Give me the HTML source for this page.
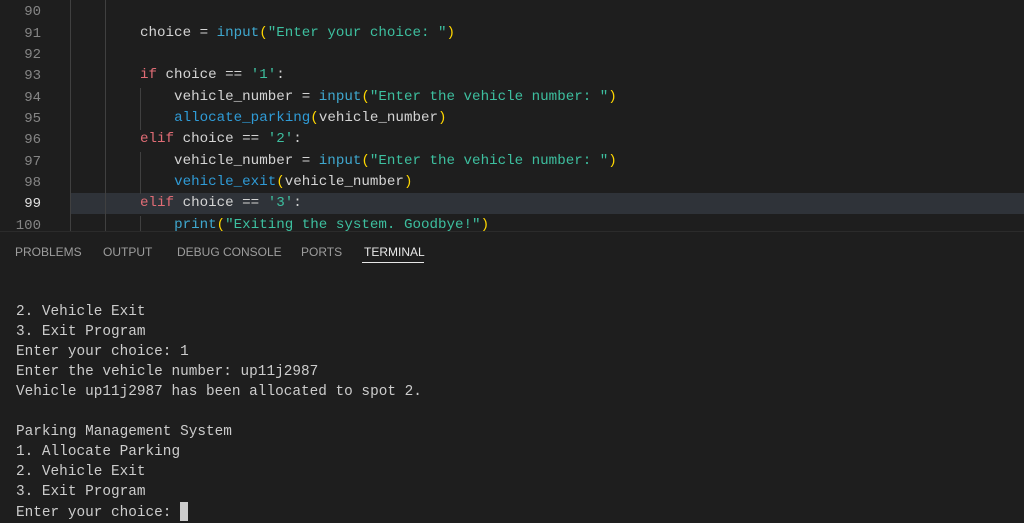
<!DOCTYPE html>
<html><head><style>
*{margin:0;padding:0;box-sizing:border-box}
body{width:1024px;height:521px;overflow:hidden;background:#1e1e1e;font-family:"Liberation Mono",monospace;position:relative}
#ed{position:absolute;left:0;top:0;width:1024px;height:231px;background:#1e1e1e;overflow:hidden}
.ln{position:absolute;left:0;width:41px;text-align:right;color:#858585;font-size:14px;margin-top:2px}
.cl{position:absolute;left:140px;font-size:14.2px;white-space:pre;color:#d4d4d4;margin-top:2px}
.g{position:absolute;width:1px;background:#404040}
#hl{position:absolute;left:70px;top:193px;width:954px;height:21px;background:#2f3339}
.k{color:#e06c75}.f{color:#3fa8cf}.s{color:#3dbf9f}.p{color:#ffd700}.w{color:#dcdcdc}.b{color:#4fc1ff}.fn{color:#2f9bd6}
#bd{position:absolute;left:0;top:231px;width:1024px;height:1px;background:#2b2b2b}
.tab{position:absolute;top:245px;font-family:"Liberation Sans",sans-serif;font-size:12px;color:#9d9d9d}
#term{position:absolute;left:16px;top:302px;font-size:14.4px;line-height:20px;color:#cccccc;white-space:pre}
</style></head><body>
<div id="ed">
<div id="hl"></div>
<div class="g" style="left:70px;top:0;height:231px"></div>
<div class="g" style="left:105px;top:0;height:231px"></div>
<div class="g" style="left:140px;top:88px;height:42px"></div>
<div class="g" style="left:140px;top:152px;height:42px"></div>
<div class="g" style="left:140px;top:216px;height:15px"></div>
<div class="ln" style="top:2px">90</div>
<div class="ln" style="top:24px">91</div>
<div class="ln" style="top:45px">92</div>
<div class="ln" style="top:66px">93</div>
<div class="ln" style="top:88px">94</div>
<div class="ln" style="top:109px">95</div>
<div class="ln" style="top:130px">96</div>
<div class="ln" style="top:152px">97</div>
<div class="ln" style="top:173px">98</div>
<div class="ln" style="top:194px;color:#e0e0e0">99</div>
<div class="ln" style="top:216px">100</div>
<div class="cl" style="top:23px">choice = <span class="f">input</span><span class="p">(</span><span class="s">"Enter your choice: "</span><span class="p">)</span></div>
<div class="cl" style="top:65px"><span class="k">if</span> choice == <span class="s">'1'</span>:</div>
<div class="cl" style="top:87px">    vehicle_number = <span class="f">input</span><span class="p">(</span><span class="s">"Enter the vehicle number: "</span><span class="p">)</span></div>
<div class="cl" style="top:108px">    <span class="fn">allocate_parking</span><span class="p">(</span>vehicle_number<span class="p">)</span></div>
<div class="cl" style="top:129px"><span class="k">elif</span> choice == <span class="s">'2'</span>:</div>
<div class="cl" style="top:151px">    vehicle_number = <span class="f">input</span><span class="p">(</span><span class="s">"Enter the vehicle number: "</span><span class="p">)</span></div>
<div class="cl" style="top:172px">    <span class="fn">vehicle_exit</span><span class="p">(</span>vehicle_number<span class="p">)</span></div>
<div class="cl" style="top:193px"><span class="k">elif</span> choice == <span class="s">'3'</span>:</div>
<div class="cl" style="top:215px">    <span class="f">print</span><span class="p">(</span><span class="s">"Exiting the system. Goodbye!"</span><span class="p">)</span></div>
</div>
<div id="bd"></div>
<div class="tab" style="left:15px">PROBLEMS</div>
<div class="tab" style="left:103px">OUTPUT</div>
<div class="tab" style="left:177px">DEBUG CONSOLE</div>
<div class="tab" style="left:301px">PORTS</div>
<div class="tab" style="left:364px;color:#e7e7e7">TERMINAL</div>
<div style="position:absolute;left:362px;top:262px;width:62px;height:1px;background:#e7e7e7"></div>
<div id="term">2. Vehicle Exit
3. Exit Program
Enter your choice: 1
Enter the vehicle number: up11j2987
Vehicle up11j2987 has been allocated to spot 2.

Parking Management System
1. Allocate Parking
2. Vehicle Exit
3. Exit Program
Enter your choice: <span style="display:inline-block;width:8px;height:19px;background:#cccccc;vertical-align:-5px"></span></div>
</body></html>
